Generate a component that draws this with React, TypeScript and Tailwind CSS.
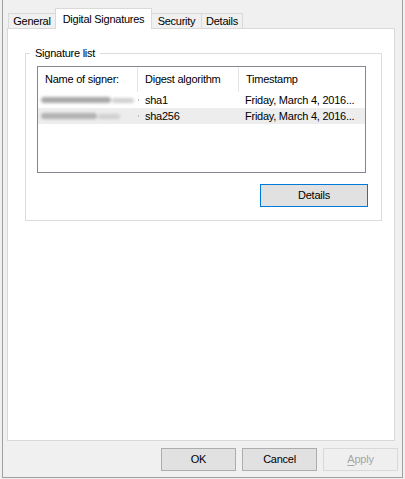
const font = { fontFamily: '"Liberation Sans", Arial, sans-serif' };

function Tab({ label, active, className }: { label: string; active?: boolean; className: string }) {
  return (
    <div
      className={
        active
          ? `relative z-10 -mb-px flex h-[21px] items-center justify-center border border-b-0 border-[#d9d9d9] bg-white ${className}`
          : `flex h-[15px] items-center justify-center border-[#d9d9d9] bg-[#f0f0f0] ${className}`
      }
    >
      <span className={active ? "" : "mt-[1px]"}>{label}</span>
    </div>
  );
}

// blurred-out signer name
function Blur({ w, tone }: { w: number; tone: string }) {
  return (
    <div className="flex items-center gap-[1px] blur-[1.5px]">
      <div className={`h-[6px] rounded-sm ${tone}`} style={{ width: w }} />
      <div className="h-[5px] w-[22px] rounded-sm bg-[#cfcfcf]" />
    </div>
  );
}

const rows = [
  { algo: "sha1", blur: 70, tone: "bg-[#a8a8a8]", hl: false },
  { algo: "sha256", blur: 56, tone: "bg-[#b0b0b0]", hl: true },
];

export default function App() {
  return (
    <div
      className="h-[479px] w-[405px] bg-[#f0f0f0] px-[2px] pb-px text-[11px] tracking-[-0.25px] text-black"
      style={font}
    >
      <div className="flex h-full flex-col border-x border-b border-[#a0a0a0] pt-[8px]">
        {/* tabs */}
        <div className="flex h-[20px] items-end pl-[5px]">
          <Tab label="General" className="w-[48px] border-l border-t border-r" />
          <Tab label="Digital Signatures" active className="-ml-px w-[97px]" />
          <Tab label="Security" className="w-[50px] border-t border-r" />
          <Tab label="Details" className="w-[41px] border-t border-r" />
        </div>

        {/* panel */}
        <div className="ml-[4px] mr-[7px] h-[413px] border border-[#d9d9d9] bg-white pt-[24px]">
          <div className="relative ml-[17px] flex h-[168px] w-[357px] flex-col border border-[#dcdcdc]">
            <span className="absolute left-[4px] top-[-8px] h-[14px] bg-white px-[5px] leading-[14px]">
              Signature list
            </span>

            <div className="ml-[11px] mt-[12px] h-[107px] w-[329px] border border-[#828790] bg-white">
              <div className="flex h-[25px] items-center">
                <div className="flex h-full w-[100px] items-center border-r border-[#e5e5e5] pl-[7px]">
                  Name of signer:
                </div>
                <div className="flex h-full w-[101px] items-center border-r border-[#e5e5e5] pl-[7px]">
                  Digest algorithm
                </div>
                <div className="flex h-full flex-1 items-center pl-[7px]">Timestamp</div>
              </div>
              {rows.map((r) => (
                <div
                  key={r.algo}
                  className={`flex h-[16px] items-center ${r.hl ? "bg-[#ededed]" : ""}`}
                >
                  <div className="flex w-[100px] items-center pl-[3px]">
                    <Blur w={r.blur} tone={r.tone} />
                  </div>
                  <div className="flex w-[101px] items-center">
                    <span className="mr-[6px] h-[2px] w-px bg-[#bdbdbd]" />
                    {r.algo}
                  </div>
                  <div className="flex-1 pl-[6px]">Friday, March 4, 2016...</div>
                </div>
              ))}
            </div>

            <button className="ml-auto mr-[13px] mt-[11px] h-[23px] w-[108px] border border-[#0078d7] bg-[#e1e1e1]">
              Details
            </button>
          </div>
        </div>

        {/* dialog buttons */}
        <div className="mt-[7px] flex justify-end gap-[6px] pr-[4px]">
          <button className="h-[23px] w-[75px] border border-[#adadad] bg-[#e1e1e1]">OK</button>
          <button className="h-[23px] w-[75px] border border-[#adadad] bg-[#e1e1e1]">Cancel</button>
          <button className="h-[23px] w-[75px] border border-[#d9d9d9] bg-[#efefef] text-[#a6a6a6]">
            <span className="underline underline-offset-2">A</span>pply
          </button>
        </div>
      </div>
    </div>
  );
}
